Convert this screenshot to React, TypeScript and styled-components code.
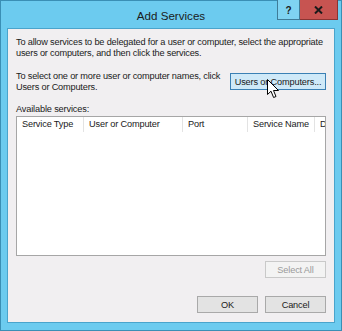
import styled, { createGlobalStyle } from "styled-components";

const Global = createGlobalStyle`
  html, body {
    margin: 0;
    padding: 0;
    background: #ffffff;
  }
  * {
    box-sizing: border-box;
  }
`;

const columns = [
  { label: "Service Type", width: 67 },
  { label: "User or Computer", width: 99 },
  { label: "Port", width: 65 },
  { label: "Service Name", width: 67 },
  { label: "D", width: 11 },
];

export default function App() {
  return (
    <>
      <Global />
      <Window>
        <TitleBar>
          <span />
          <Title>Add Services</Title>
          <Controls>
            <HelpButton>?</HelpButton>
            <CloseButton>
              <svg width="9" height="8" viewBox="0 0 9 8">
                <path d="M1 0.5 L8 7.5 M8 0.5 L1 7.5" stroke="#1a1a1a" strokeWidth="2" />
              </svg>
            </CloseButton>
          </Controls>
        </TitleBar>
        <Client>
          <Text>
            To allow services to be delegated for a user or computer, select the appropriate
            <br />
            users or computers, and then click the services.
          </Text>
          <SelectRow>
            <Text>
              To select one or more user or computer names, click
              <br />
              Users or Computers.
            </Text>
            <ButtonWrap>
              <Button $hover $width={96}>Users or Computers...</Button>
              <Cursor width="13" height="20" viewBox="0 0 13 20">
                <path
                  d="M0.5 0.5 L0.5 15.5 L4 12.2 L6.6 18.5 L9 17.5 L6.5 11.5 L11.5 11.5 Z"
                  fill="#ffffff"
                  stroke="#000000"
                  strokeWidth="1"
                  strokeLinejoin="round"
                />
              </Cursor>
            </ButtonWrap>
          </SelectRow>
          <Label>Available services:</Label>
          <ListBox>
            <HeaderRow>
              {columns.map((c) => (
                <HeaderCell key={c.label} style={{ width: c.width }}>
                  {c.label}
                </HeaderCell>
              ))}
            </HeaderRow>
          </ListBox>
          <ButtonRow $top={5}>
            <Button $disabled $width={61}>Select All</Button>
          </ButtonRow>
          <ButtonRow $top={18}>
            <Button $width={61}>OK</Button>
            <Button $width={61}>Cancel</Button>
          </ButtonRow>
        </Client>
      </Window>
    </>
  );
}

const Window = styled.div`
  width: 342px;
  height: 331px;
  background: #6ccbef;
  border: 1px solid #3a8fb5;
  display: flex;
  flex-direction: column;
  font-family: "Liberation Sans", Arial, sans-serif;
`;

const TitleBar = styled.div`
  height: 27px;
  display: grid;
  grid-template-columns: 1fr auto 1fr;
  padding-right: 3px;
`;

const Title = styled.div`
  font-size: 11.6px;
  color: #1b1b1b;
  line-height: 27px;
  padding-top: 1px;
  padding-left: 3px;
`;

const Controls = styled.div`
  justify-self: end;
  align-self: start;
  display: flex;
  margin-top: -1px;
`;

const HelpButton = styled.div`
  width: 23px;
  height: 20px;
  background: #7fd3f2;
  border: 1px solid #3f7c98;
  border-top: none;
  font-size: 10px;
  font-weight: bold;
  color: #1a1a1a;
  display: flex;
  align-items: center;
  justify-content: center;
  padding-top: 1px;
`;

const CloseButton = styled.div`
  width: 38px;
  height: 20px;
  background: #c75451;
  border-bottom: 1px solid #8a3432;
  border-right: 1px solid #8a3432;
  display: flex;
  align-items: center;
  justify-content: center;
`;

const Client = styled.div`
  flex: 1;
  margin: 0 6px 7px 6px;
  background: #f1eff1;
  border: 1px solid #4aa4cc;
  padding: 8px 8px 0 8px;
  display: flex;
  flex-direction: column;
`;

const Text = styled.div`
  font-size: 9.2px;
  letter-spacing: -0.18px;
  line-height: 11px;
  color: #1a1a1a;
  white-space: nowrap;
`;

const SelectRow = styled.div`
  display: flex;
  justify-content: space-between;
  align-items: flex-start;
  margin-top: 12px;
`;

const ButtonWrap = styled.div`
  position: relative;
  margin-top: 2px;
`;

const Cursor = styled.svg`
  position: absolute;
  left: 37px;
  top: 6px;
`;

const Button = styled.div<{ $hover?: boolean; $disabled?: boolean; $width: number }>`
  width: ${(p) => p.$width}px;
  height: 17px;
  display: flex;
  align-items: center;
  justify-content: center;
  font-size: 9.2px;
  letter-spacing: -0.15px;
  white-space: nowrap;
  color: ${(p) => (p.$disabled ? "#9a9a9a" : "#1a1a1a")};
  background: ${(p) => (p.$hover ? "#cfe9f8" : p.$disabled ? "#f3f3f3" : "#e3e3e3")};
  border: 1px solid ${(p) => (p.$hover ? "#3b80b4" : p.$disabled ? "#c9c9c9" : "#a9a9a9")};
`;

const Label = styled.div`
  font-size: 9.2px;
  letter-spacing: -0.15px;
  line-height: 11px;
  color: #1a1a1a;
  margin-top: 11px;
`;

const ListBox = styled.div`
  height: 140px;
  margin-top: 1px;
  background: #ffffff;
  border: 1px solid #a6a6a6;
  overflow: hidden;
`;

const HeaderRow = styled.div`
  display: flex;
  height: 15px;
`;

const HeaderCell = styled.div`
  flex-shrink: 0;
  font-size: 9.2px;
  letter-spacing: -0.15px;
  line-height: 15px;
  color: #1a1a1a;
  padding-left: 5px;
  border-right: 1px solid #e3e3e3;
  white-space: nowrap;
  overflow: hidden;
`;

const ButtonRow = styled.div<{ $top: number }>`
  display: flex;
  justify-content: flex-end;
  gap: 7px;
  margin-top: ${(p) => p.$top}px;
`;
